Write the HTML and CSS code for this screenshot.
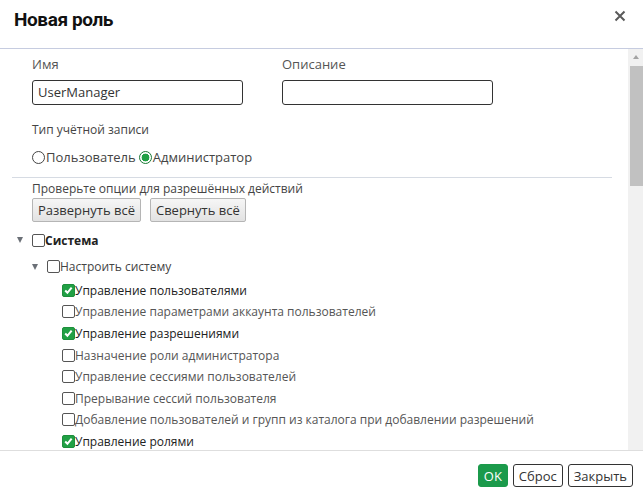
FILE: index.html
```html
<!DOCTYPE html>
<html lang="ru">
<head>
  <meta charset="UTF-8">
  <title>Новая роль</title>
  <link rel="stylesheet" href="styles.css">
</head>
<body>
  <div class="dialog">
    <div class="dialog-head">
      <h1>Новая роль</h1>
      <svg class="close" viewBox="0 0 12 12"><path d="M1.5 1.5l9 9M10.5 1.5l-9 9" /></svg>
    </div>

    <div class="dialog-body">
      <div class="content">
        <div class="fields">
          <div class="field">
            <div class="label">Имя</div>
            <div class="input">UserManager</div>
          </div>
          <div class="field">
            <div class="label">Описание</div>
            <div class="input"></div>
          </div>
        </div>

        <div class="small type-label">Тип учётной записи</div>
        <div class="radios">
          <span class="radio"></span>Пользователь
          <span class="radio on"></span>Администратор
        </div>

        <hr class="sep">

        <div class="small hint">Проверьте опции для разрешённых действий</div>
        <div class="tools">
          <button class="btn-grey">Развернуть всё</button>
          <button class="btn-grey">Свернуть всё</button>
        </div>

        <ul class="tree">
          <li>
            <div class="row top"><span class="tri"></span><span class="cb"></span><b>Система</b></div>
            <ul>
              <li>
                <div class="row sub"><span class="tri"></span><span class="cb"></span>Настроить систему</div>
                <ul class="leaves">
                  <li class="row on"><span class="cb on"><svg viewBox="0 0 13 13"><path d="M2.6 6.6l2.6 2.6 5-6" /></svg></span>Управление пользователями</li>
                  <li class="row"><span class="cb"></span>Управление параметрами аккаунта пользователей</li>
                  <li class="row on"><span class="cb on"><svg viewBox="0 0 13 13"><path d="M2.6 6.6l2.6 2.6 5-6" /></svg></span>Управление разрешениями</li>
                  <li class="row"><span class="cb"></span>Назначение роли администратора</li>
                  <li class="row"><span class="cb"></span>Управление сессиями пользователей</li>
                  <li class="row"><span class="cb"></span>Прерывание сессий пользователя</li>
                  <li class="row"><span class="cb"></span>Добавление пользователей и групп из каталога при добавлении разрешений</li>
                  <li class="row on"><span class="cb on"><svg viewBox="0 0 13 13"><path d="M2.6 6.6l2.6 2.6 5-6" /></svg></span>Управление ролями</li>
                </ul>
              </li>
            </ul>
          </li>
        </ul>
      </div>

      <div class="scrollbar">
        <span class="arrow"></span>
        <span class="thumb"></span>
      </div>
    </div>

    <div class="dialog-foot">
      <button class="btn btn-ok">OK</button>
      <button class="btn">Сброс</button>
      <button class="btn">Закрыть</button>
    </div>
  </div>
</body>
</html>
```

FILE: styles.css
```css
* {
  box-sizing: border-box;
}

body {
  margin: 0;
  background: #fff;
  font-family: 'Open Sans', sans-serif;
  font-size: 13px;
  color: #333;
}

.dialog {
  width: 643px;
  height: 493px;
  display: flex;
  flex-direction: column;
}

.dialog-head {
  height: 49px;
  flex: none;
  display: flex;
  align-items: flex-start;
  justify-content: space-between;
  padding: 8px 17px 0 14px;
  border-bottom: 1px solid #c6cce0;
}

.dialog-head h1 {
  margin: 0;
  font-family: Roboto, sans-serif;
  font-size: 19px;
  font-weight: 700;
  color: #111;
  letter-spacing: -0.4px;
}

.close {
  width: 12px;
  height: 12px;
  margin-top: 2px;
  fill: none;
  stroke: #5a5a5a;
  stroke-width: 2;
}

.dialog-body {
  height: 401px;
  flex: none;
  display: flex;
}

.content {
  flex: 1;
  overflow: hidden;
  padding: 6px 0 0 12px;
}

.scrollbar {
  width: 15px;
  flex: none;
  background: #f1f1f1;
  padding-top: 6px;
}

.arrow {
  display: block;
  width: 0;
  height: 0;
  margin-left: 5px;
  border-left: 3.5px solid transparent;
  border-right: 3.5px solid transparent;
  border-bottom: 4px solid #a3a3a3;
}

.thumb {
  display: block;
  margin: 7px 0 0 2px;
  height: 120px;
  background: #c1c1c1;
}

.fields {
  display: flex;
  gap: 39px;
  padding-left: 20px;
}

.field {
  width: 211px;
}

.label {
  line-height: 18px;
  color: #555;
}

.small {
  font-size: 12px;
  line-height: 18px;
  color: #444;
}

.input {
  margin-top: 7px;
  height: 25px;
  border: 1px solid #333;
  border-radius: 3px;
  padding: 0 5px;
  line-height: 23px;
  color: #333;
}

.type-label {
  margin-top: 16px;
  padding-left: 20px;
}

.radios {
  margin-top: 9px;
  padding-left: 20px;
  line-height: 18px;
  display: flex;
  align-items: center;
  color: #444;
}

.radio {
  width: 13px;
  height: 13px;
  border: 1px solid #444;
  border-radius: 50%;
  margin-right: 1px;
  flex: none;
}

.radio.on {
  margin-left: 3px;
  border-color: #1b7a36;
  background: radial-gradient(circle, #21a045 0 3.6px, #fff 4.2px);
}

.sep {
  margin: 11px 0 0;
  border: none;
  border-top: 1px solid #d6dbe3;
  width: 600px;
}

.hint {
  margin-top: 2px;
  padding-left: 20px;
}

.tools {
  padding-left: 20px;
  display: flex;
  gap: 9px;
}

.btn-grey {
  height: 24px;
  padding: 0 5px;
  font-family: inherit;
  font-size: 13px;
  color: #333;
  background: linear-gradient(#f6f6f6, #e2e2e2);
  border: 1px solid #b5b5b5;
  border-radius: 2px;
}

.tree,
.tree ul {
  list-style: none;
  margin: 0;
  padding: 0;
}

.tree {
  margin-top: 7px;
  padding-left: 5px;
  font-size: 12px;
}

.tree ul {
  padding-left: 15px;
}

.tree .leaves {
  margin-top: 2px;
}

.row {
  display: flex;
  align-items: center;
  height: 21.6px;
  color: #555;
  white-space: nowrap;
}

.row.on {
  color: #222;
}

.row.top {
  height: 22px;
  color: #222;
}

.row.sub {
  margin-top: 5px;
  color: #444;
}

.tree .leaves .row {
  padding-left: 15px;
}

.tri {
  width: 0;
  height: 0;
  border-left: 3.5px solid transparent;
  border-right: 3.5px solid transparent;
  border-top: 6px solid #6b7077;
  margin-right: 9px;
  flex: none;
}

.cb {
  width: 13px;
  height: 13px;
  border: 1px solid #555;
  border-radius: 2px;
  background: #fff;
  flex: none;
}

.cb.on {
  border-color: #1e8f3c;
  background: #21a045;
}

.cb svg {
  display: block;
  width: 11px;
  height: 11px;
  fill: none;
  stroke: #fff;
  stroke-width: 2.4;
}

.dialog-foot {
  flex: 1;
  display: flex;
  justify-content: flex-end;
  align-items: flex-start;
  gap: 5px;
  padding: 13px 10px 0 0;
  border-top: 1px solid #dedede;
}

.btn {
  height: 23px;
  padding: 0 5px;
  font-family: inherit;
  font-size: 13px;
  color: #333;
  background: #fff;
  border: 1px solid #333;
  border-radius: 3px;
}

.btn-ok {
  width: 30px;
  background: #1b9a4b;
  border-color: #1b9a4b;
  color: #fff;
}
```
